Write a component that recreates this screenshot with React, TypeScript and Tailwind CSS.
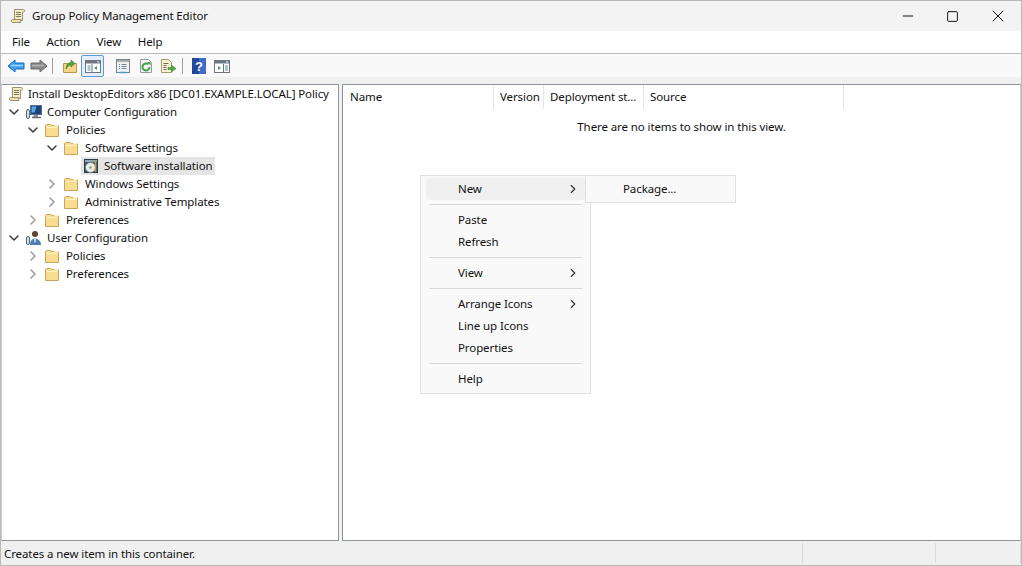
import type { ReactNode } from 'react';
import { ChevronDown, ChevronRight, Minus, Square, X } from 'lucide-react';

function Scroll() {
  return (
    <svg width="16" height="16" viewBox="0 0 16 16" className="shrink-0">
      <path d="M4.500 1.500H13.500C15 1.500 15 4 13.500 4H12.500V12.500H4.500Z" fill="#f5ecc4" stroke="#98906f" />
      <path d="M2.500 11.500H11C10 12.500 10 13.500 11 14.500H2.500C1 14.500 1 11.500 2.500 11.500Z" fill="#efe3ad" stroke="#98906f" />
      <path d="M6 4.500h5M6 6.500h5M6 8.500h5" stroke="#7f7860" />
    </svg>
  );
}

function Folder() {
  return (
    <svg width="16" height="16" viewBox="0 0 16 16" className="shrink-0">
      <path d="M1.500 14.500V3.500L2.500 2.500H7L8 3.500H14.500V14.500Z" fill="#f8dc8f" stroke="#c9a65c" strokeWidth="1" />
      <path d="M2.500 5.500H13.500" stroke="#fdf1c9" strokeWidth="1" />
      <path d="M10 2.500h4.500V4h-4.500Z" fill="#fff8e0" />
    </svg>
  );
}

function ComputerIcon() {
  return (
    <svg width="18" height="16" viewBox="0 0 18 16" className="shrink-0">
      <rect x="5.500" y="1.500" width="11" height="9" fill="#1c3f7c" stroke="#5b6f8c" />
      <path d="M6.500 2.500h5l-2 6h-3Z" fill="#5aa7e6" />
      <path d="M9 11h4v2H8Z" fill="#8c97a5" />
      <path d="M7 13.500h9" stroke="#5d6a7a" strokeWidth="1.500" />
      <rect x="1.500" y="5.500" width="3" height="9" rx="1.500" fill="#d6e0ea" stroke="#4e6b8a" />
    </svg>
  );
}

function UserIcon() {
  return (
    <svg width="18" height="16" viewBox="0 0 18 16" className="shrink-0">
      <circle cx="10" cy="4" r="3" fill="#5d4632" />
      <path d="M5 15c0-4 2-6.500 5-6.500s6 2.500 6 6.500Z" fill="#4f7fb0" />
      <path d="M9 8.500h2l-.5 4h-1Z" fill="#dfe8f0" />
      <rect x="1.500" y="6.500" width="3" height="8" rx="1.500" fill="#d6e0ea" stroke="#4e6b8a" />
    </svg>
  );
}

function DiscIcon() {
  return (
    <svg width="16" height="16" viewBox="0 0 16 16" className="shrink-0">
      <rect x="1.500" y="1.500" width="13" height="13" fill="#4a5a66" stroke="#2c3a44" />
      <path d="M2 2h12v2H2Z" fill="#8fa6b4" />
      <circle cx="7.500" cy="9.500" r="5" fill="#e9eef0" stroke="#6d7c84" strokeWidth="0.800" />
      <circle cx="7.500" cy="9.500" r="1.300" fill="#7fa25a" />
      <path d="M12.500 2v12" stroke="#c49a4b" strokeWidth="1.500" />
    </svg>
  );
}

function ArrowIcon({ dir, blue }: { dir: 'left' | 'right'; blue: boolean }) {
  return (
    <svg width="18" height="16" viewBox="0 0 18 16" className="shrink-0">
      <path
        d={dir === 'left' ? 'M1 8 8 2v3h9v6H8v3Z' : 'M17 8 10 2v3H1v6h9v3Z'}
        fill={blue ? '#3ba3f0' : '#8a8a8a'}
        stroke={blue ? '#1a6ab8' : '#666'}
        strokeWidth="1"
      />
      <path d={dir === 'left' ? 'M4 7.500h12' : 'M2 7.500h12'} stroke={blue ? '#9bd6fa' : '#b5b5b5'} strokeWidth="1.500" />
    </svg>
  );
}

function UpFolderIcon() {
  return (
    <svg width="16" height="16" viewBox="0 0 16 16">
      <path d="M1.500 14.500V5.500H14.500V14.500Z" fill="#f3d489" stroke="#b8964c" />
      <path d="M4 11c0-4 2-6 5-6.500V2l4 3.500L9 9V6.800C7 7 5.500 8.500 4 11Z" fill="#4fa83d" stroke="#2f7a25" strokeWidth="0.600" />
    </svg>
  );
}

function PaneIcon({ right }: { right?: boolean }) {
  return (
    <svg width="16" height="16" viewBox="0 0 16 16">
      <rect x="0.500" y="2.500" width="15" height="12" fill="#fff" stroke="#6e7780" />
      <path d="M1 3h14v2.500H1Z" fill="#6e7780" />
      <path d="M12 4h2" stroke="#fff" />
      {right ? (
        <>
          <path d="M4 8v4l3-2Z" fill="#3fa34d" />
          <path d="M9.500 6v8" stroke="#6e7780" />
          <path d="M11 8h3M11 10h3M11 12h3" stroke="#5b85b0" />
        </>
      ) : (
        <>
          <path d="M2.500 8h3M2.500 10h3M2.500 12h3" stroke="#5b85b0" />
          <path d="M7 6v8" stroke="#6e7780" />
          <path d="M12 8v4l-3-2Z" fill="#3fa34d" />
        </>
      )}
    </svg>
  );
}

function PropsIcon() {
  return (
    <svg width="16" height="16" viewBox="0 0 16 16">
      <rect x="1.500" y="1.500" width="13" height="13" fill="#f2f2f2" stroke="#7a7f85" />
      <path d="M2 2h12v2H2Z" fill="#a9aeb3" />
      <path d="M4 6.500h1M6.500 6.500h5M4 8.500h1M6.500 8.500h5M4 10.500h1M6.500 10.500h5" stroke="#6d87a3" />
      <path d="M5 14.500h6" stroke="#3aa0e0" strokeWidth="1.500" />
    </svg>
  );
}

function RefreshIcon() {
  return (
    <svg width="16" height="16" viewBox="0 0 16 16">
      <path d="M2.500 1.500h8l3 3v10h-11Z" fill="#f4f4f4" stroke="#9a9a9a" />
      <path d="M11.500 9a3.500 3.500 0 1 1-1.200-2.700" fill="none" stroke="#3fa34d" strokeWidth="2" />
      <path d="M9 4h3.500v3.500Z" fill="#3fa34d" />
    </svg>
  );
}

function ExportIcon() {
  return (
    <svg width="17" height="16" viewBox="0 0 17 16">
      <path d="M1.500 1.500h7l3 3v10h-10Z" fill="#f7f1d0" stroke="#a39b78" />
      <path d="M3.500 5.500h5M3.500 7.500h3M3.500 9.500h3M3.500 11.500h3" stroke="#6f6b5a" />
      <path d="M8 9.500h3.500V7l4.500 3.500-4.500 3.500v-2.500H8Z" fill="#4fb04a" stroke="#2f7a25" strokeWidth="0.500" />
    </svg>
  );
}

function HelpIcon() {
  return (
    <svg width="14" height="16" viewBox="0 0 14 16">
      <rect width="14" height="16" fill="#24479c" />
      <rect x="7" width="7" height="16" fill="#3f6cc4" />
      <text x="7" y="13" textAnchor="middle" fontSize="13" fontWeight="700" fill="#fff" fontFamily="Liberation Sans, sans-serif">?</text>
    </svg>
  );
}

function ToolSep({ className }: { className: string }) {
  return <div className={`h-[16px] w-px bg-[#9f9f9f] ${className}`} />;
}

function ToolBtn({ children, active }: { children: ReactNode; active?: boolean }) {
  return (
    <div
      className={`flex h-[22px] w-[23px] items-center justify-center rounded-[2px] ${
        active ? 'border border-[#5a9bd8] bg-[#e3eef8]' : ''
      }`}
    >
      {children}
    </div>
  );
}

function TreeRow({
  depth,
  open,
  icon,
  label,
  selected,
}: {
  depth: number;
  open?: boolean;
  icon: ReactNode;
  label: string;
  selected?: boolean;
}) {
  return (
    <div className="flex h-[18px] items-center" style={{ paddingLeft: depth * 19 + 4 }}>
      <div className="flex w-[19px] shrink-0 items-center">
        {open === true && <ChevronDown size={16} strokeWidth={2.200} className="text-[#3a3a3a]" />}
        {open === false && <ChevronRight size={16} strokeWidth={2.200} className="text-[#9a9a9a]" />}
      </div>
      <div className={`flex h-[18px] items-center ${selected ? '-ml-px bg-[#e5e5e5] pr-[2px]' : ''}`}>
        <div className={selected ? 'w-[23px] pl-[2px]' : 'w-[22px]'}>{icon}</div>
        <span>{label}</span>
      </div>
    </div>
  );
}

function Sep() {
  return <div className="mx-[8px] my-[4px] h-px bg-[#d9d9d9]" />;
}

function MenuItem({ label, sub, hover }: { label: string; sub?: boolean; hover?: boolean }) {
  return (
    <div className={`mx-[5px] flex h-[22px] items-center justify-between rounded-[4px] pb-[1px] pl-[32px] pr-[5px] ${hover ? 'bg-[#f0f0f0]' : ''}`}>
      <span>{label}</span>
      {sub && <ChevronRight size={14} strokeWidth={2} className="text-[#333]" />}
    </div>
  );
}

function ColHead({ label, w }: { label: string; w: string }) {
  return (
    <div className={`flex h-[24px] shrink-0 items-center border-r border-[#e5e5e5] ${w}`}>
      <span className="truncate">{label}</span>
    </div>
  );
}

export default function App() {
  return (
    <div className="relative flex h-[566px] w-[1022px] flex-col overflow-hidden border border-[#b9b9b9] bg-[#f0f0f0] font-['Noto_Sans','Open_Sans',sans-serif] text-[11.5px] leading-[18px] tracking-[-0.1px] whitespace-nowrap text-[#111]">
      {/* Title bar */}
      <div className="flex h-[30px] shrink-0 items-center bg-[#f3f3f3]">
        <div className="ml-[9px]">
          <Scroll />
        </div>
        <span className="ml-[6px]">Group Policy Management Editor</span>
        <div className="ml-auto flex items-center text-[#111]">
          <div className="flex w-[45px] justify-center">
            <Minus size={16} strokeWidth={1.500} />
          </div>
          <div className="flex w-[45px] justify-center">
            <Square size={13} strokeWidth={1.800} />
          </div>
          <div className="flex w-[46px] justify-center">
            <X size={20} strokeWidth={1.200} />
          </div>
        </div>
      </div>

      {/* Menu bar */}
      <div className="flex h-[23px] shrink-0 items-center gap-[16.500px] border-b border-[#b9bcc0] bg-white pb-[1px] pl-[11px]">
        <span>File</span>
        <span>Action</span>
        <span>View</span>
        <span>Help</span>
      </div>

      {/* Toolbar */}
      <div className="flex h-[23px] shrink-0 items-center bg-[#f9f9f9] pl-[3px]">
        <ToolBtn><ArrowIcon dir="left" blue /></ToolBtn>
        <ToolBtn><ArrowIcon dir="right" blue={false} /></ToolBtn>
        <ToolSep className="ml-[2px] mr-[5px]" />
        <ToolBtn><UpFolderIcon /></ToolBtn>
        <ToolBtn active><PaneIcon /></ToolBtn>
        <div className="w-[7px]" />
        <ToolBtn><PropsIcon /></ToolBtn>
        <ToolBtn><RefreshIcon /></ToolBtn>
        <ToolBtn><ExportIcon /></ToolBtn>
        <ToolSep className="ml-[2px] mr-[4px]" />
        <ToolBtn><HelpIcon /></ToolBtn>
        <ToolBtn><PaneIcon right /></ToolBtn>
      </div>

      {/* Panes */}
      <div className="flex min-h-0 flex-1 gap-[3px] pt-[7px]">
        <div className="w-[338px] shrink-0 border border-[#8f959c] border-l-[#d0d0d0] bg-white">
          <div className="flex h-[18px] items-center pl-[6px]">
            <Scroll />
            <span className="ml-[4px]">Install DesktopEditors x86 [DC01.EXAMPLE.LOCAL] Policy</span>
          </div>
          <TreeRow depth={0} open icon={<ComputerIcon />} label="Computer Configuration" />
          <TreeRow depth={1} open icon={<Folder />} label="Policies" />
          <TreeRow depth={2} open icon={<Folder />} label="Software Settings" />
          <TreeRow depth={3} icon={<DiscIcon />} label="Software installation" selected />
          <TreeRow depth={2} open={false} icon={<Folder />} label="Windows Settings" />
          <TreeRow depth={2} open={false} icon={<Folder />} label="Administrative Templates" />
          <TreeRow depth={1} open={false} icon={<Folder />} label="Preferences" />
          <TreeRow depth={0} open icon={<UserIcon />} label="User Configuration" />
          <TreeRow depth={1} open={false} icon={<Folder />} label="Policies" />
          <TreeRow depth={1} open={false} icon={<Folder />} label="Preferences" />
        </div>
        <div className="min-w-0 flex-1 border border-[#8f959c] border-r-[#d0d0d0] bg-white">
          <div className="flex">
            <ColHead label="Name" w="w-[151px] pl-[7px]" />
            <ColHead label="Version" w="w-[50px] pl-[6px]" />
            <ColHead label="Deployment st..." w="w-[100px] pl-[6px]" />
            <ColHead label="Source" w="w-[200px] pl-[6px]" />
          </div>
          <div className="mt-[9px] text-center">There are no items to show in this view.</div>
        </div>
      </div>

      {/* Status bar */}
      <div className="flex h-[24px] shrink-0 items-center bg-[#f0f0f0] pl-[3px]">
        <span className="flex-1 pt-[1px]">Creates a new item in this container.</span>
        <div className="h-[20px] w-px bg-[#d9d9d9]" />
        <div className="w-[132px]" />
        <div className="h-[20px] w-px bg-[#d9d9d9]" />
        <div className="w-[84px]" />
        <div className="h-[20px] w-px bg-[#d9d9d9]" />
      </div>

      {/* Context menu */}
      <div className="absolute left-[419px] top-[174px] h-[219px] w-[171px] border border-[#e0e0e0] bg-[#f9f9f9] pt-[2px]">
        <MenuItem label="New" sub hover />
        <Sep />
        <MenuItem label="Paste" />
        <MenuItem label="Refresh" />
        <Sep />
        <MenuItem label="View" sub />
        <Sep />
        <MenuItem label="Arrange Icons" sub />
        <MenuItem label="Line up Icons" />
        <MenuItem label="Properties" />
        <Sep />
        <MenuItem label="Help" />
      </div>
      <div className="absolute left-[584px] top-[174px] flex h-[28px] w-[151px] items-center border border-[#e0e0e0] bg-[#f9f9f9] pl-[37px]">
        Package...
      </div>
    </div>
  );
}
